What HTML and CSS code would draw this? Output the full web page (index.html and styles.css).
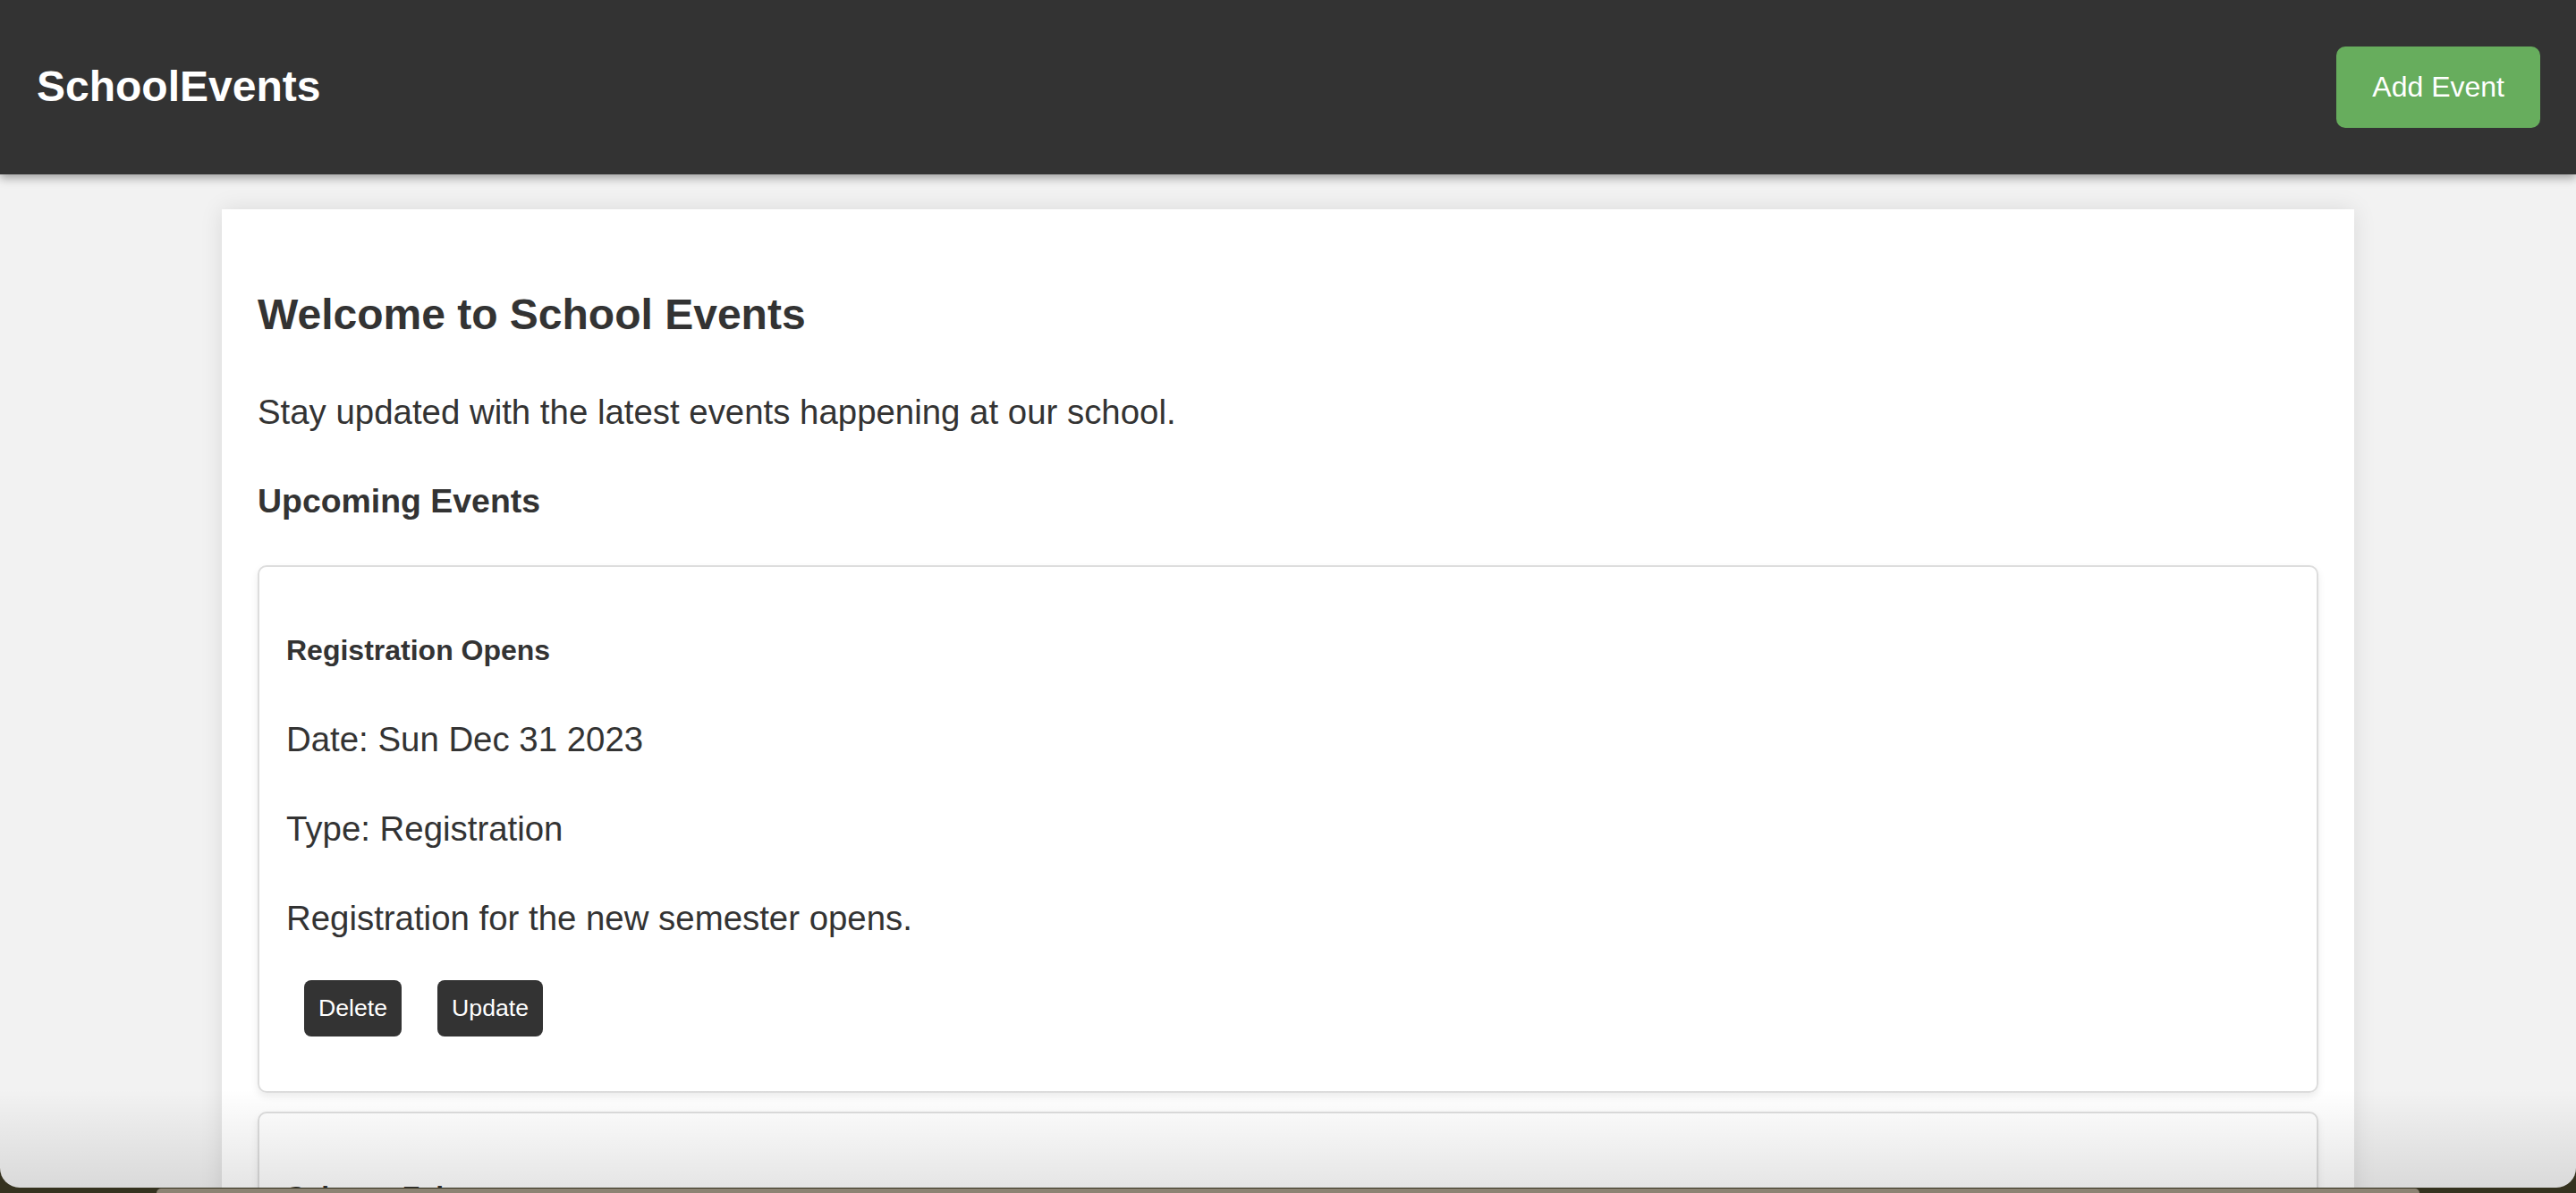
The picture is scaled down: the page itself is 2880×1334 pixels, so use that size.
FILE: index.html
```html
<!DOCTYPE html>
<html lang="en">
<head>
<meta charset="utf-8">
<title>SchoolEvents</title>
<link rel="stylesheet" href="styles.css">
</head>
<body>
<div class="window">
  <header class="topbar">
    <div class="logo">SchoolEvents</div>
    <button class="add-btn">Add Event</button>
  </header>
  <main class="container">
    <h2>Welcome to School Events</h2>
    <p>Stay updated with the latest events happening at our school.</p>
    <h3>Upcoming Events</h3>
    <div class="event-card">
      <h4>Registration Opens</h4>
      <p>Date: Sun Dec 31 2023</p>
      <p>Type: Registration</p>
      <p>Registration for the new semester opens.</p>
      <div class="actions"><button class="act-btn">Delete</button><button class="act-btn">Update</button></div>
    </div>
    <div class="event-card">
      <h4>Science Fair</h4>
      <p>Date: Fri Jan 12 2024</p>
      <p>Type: Academic</p>
      <p>Annual science fair for all grades.</p>
      <div class="actions"><button class="act-btn">Delete</button><button class="act-btn">Update</button></div>
    </div>
  </main>
  <div class="fade"></div>
</div>
<div class="dock"></div>
</body>
</html>
```

FILE: styles.css
```css
html {
  background: #35321f;
}
body {
  margin: 0;
  font-family: "Liberation Sans", Arial, sans-serif;
  font-size: 32px;
  line-height: 1.6;
  color: #333;
}
.window {
  position: relative;
  height: 1328px;
  overflow: hidden;
  background: #f2f2f2;
  border-radius: 0 0 22px 22px;
}
.topbar {
  height: 195px;
  box-sizing: border-box;
  padding: 0 40px 3px 41px;
  background: #333;
  display: flex;
  align-items: center;
  justify-content: space-between;
  box-shadow: 0 4px 10px rgba(0, 0, 0, 0.35);
  position: relative;
  z-index: 1;
}
.logo {
  font-size: 48px;
  font-weight: bold;
  color: #fff;
  line-height: normal;
}
.add-btn {
  height: 91px;
  margin-top: 3px;
  padding: 0 40px;
  border: none;
  border-radius: 10px;
  background: #67ad5d;
  color: #fff;
  font-family: "Liberation Sans", Arial, sans-serif;
  font-size: 32px;
}
.container {
  width: 2384px;
  box-sizing: border-box;
  margin: 39px auto 0;
  padding: 40px;
  background: #fff;
  box-shadow: 0 0 24px rgba(0, 0, 0, 0.1);
}
h2 {
  font-size: 48px;
  margin: 39.84px 0;
}
p {
  font-size: 38.4px;
  margin: 38.4px 0;
}
h3 {
  font-size: 37.44px;
  margin: 39.5px 0 41px;
}
.event-card {
  border: 2px solid #ddd;
  border-radius: 10px;
  padding: 0 30px;
  margin-bottom: 21px;
  box-shadow: 0 4px 8px rgba(0, 0, 0, 0.08);
}
.event-card h4 {
  font-size: 32px;
  margin: 68px 0 42.56px;
}
.actions {
  padding-bottom: 30px;
}
.act-btn {
  margin: 0 20px 31px;
  padding: 16px 16px;
  border: none;
  border-radius: 8px;
  background: #333;
  color: #fff;
  font-family: "Liberation Sans", Arial, sans-serif;
  font-size: 26.67px;
}
.fade {
  position: absolute;
  left: 0;
  right: 0;
  bottom: 0;
  height: 110px;
  background: linear-gradient(rgba(0, 0, 0, 0), rgba(0, 0, 0, 0.1));
  pointer-events: none;
}
.dock {
  width: 2530px;
  height: 5px;
  margin: 1px auto 0;
  background: #8c8373;
  border-radius: 8px 8px 0 0;
}
```
